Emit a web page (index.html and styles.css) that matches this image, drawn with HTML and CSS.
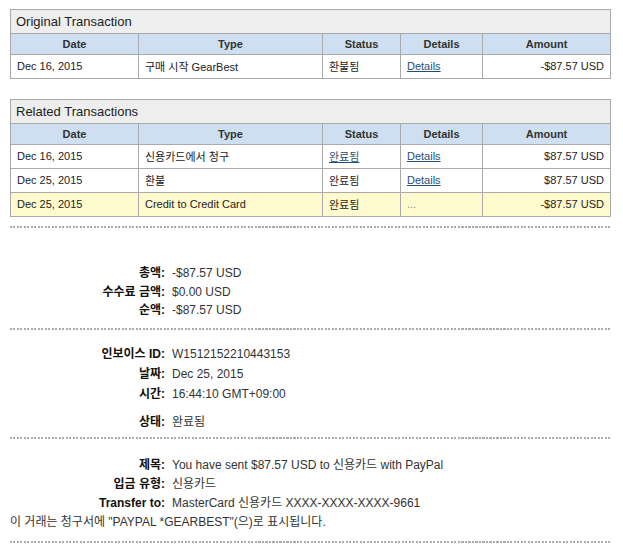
FILE: index.html
```html
<!DOCTYPE html>
<html>
<head>
<meta charset="utf-8">
<link rel="stylesheet" href="styles.css">
</head>
<body>
<div class="page">
  <table class="tx">
    <colgroup><col class="c-date"><col class="c-type"><col class="c-status"><col class="c-details"><col class="c-amount"></colgroup>
    <tr class="cap"><td colspan="5">Original Transaction</td></tr>
    <tr class="head"><th>Date</th><th>Type</th><th>Status</th><th>Details</th><th>Amount</th></tr>
    <tr class="row"><td>Dec 16, 2015</td><td>구매 시작 GearBest</td><td>환불됨</td><td><a href="#">Details</a></td><td class="amt">-$87.57 USD</td></tr>
  </table>

  <table class="tx second">
    <colgroup><col class="c-date"><col class="c-type"><col class="c-status"><col class="c-details"><col class="c-amount"></colgroup>
    <tr class="cap"><td colspan="5">Related Transactions</td></tr>
    <tr class="head"><th>Date</th><th>Type</th><th>Status</th><th>Details</th><th>Amount</th></tr>
    <tr class="row"><td>Dec 16, 2015</td><td>신용카드에서 청구</td><td><a href="#">완료됨</a></td><td><a href="#">Details</a></td><td class="amt">$87.57 USD</td></tr>
    <tr class="row"><td>Dec 25, 2015</td><td>환불</td><td>완료됨</td><td><a href="#">Details</a></td><td class="amt">$87.57 USD</td></tr>
    <tr class="row hl"><td>Dec 25, 2015</td><td>Credit to Credit Card</td><td>완료됨</td><td class="dim">...</td><td class="amt">-$87.57 USD</td></tr>
  </table>

  <div class="dots first"></div>

  <dl class="info sec1">
    <dt>총액:</dt><dd>-$87.57 USD</dd>
    <dt>수수료 금액:</dt><dd>$0.00 USD</dd>
    <dt>순액:</dt><dd>-$87.57 USD</dd>
  </dl>

  <div class="dots"></div>

  <dl class="info sec2">
    <dt>인보이스 ID:</dt><dd>W1512152210443153</dd>
    <dt>날짜:</dt><dd>Dec 25, 2015</dd>
    <dt>시간:</dt><dd>16:44:10 GMT+09:00</dd>
    <dt class="gap">상태:</dt><dd class="gap">완료됨</dd>
  </dl>

  <div class="dots"></div>

  <dl class="info sec3">
    <dt>제목:</dt><dd>You have sent $87.57 USD to 신용카드 with PayPal</dd>
    <dt>입금 유형:</dt><dd>신용카드</dd>
    <dt>Transfer to:</dt><dd>MasterCard 신용카드 XXXX-XXXX-XXXX-9661</dd>
  </dl>
  <p class="note">이 거래는 청구서에 "PAYPAL *GEARBEST"(으)로 표시됩니다.</p>

  <div class="dots"></div>
</div>
</body>
</html>
```

FILE: styles.css
```css
html, body {
  margin: 0;
  padding: 0;
  background: #fff;
}
body {
  font-family: "Liberation Sans", Arial, "Noto Sans CJK KR", sans-serif;
  color: #222;
}
.page {
  padding: 9px 0 0 10px;
  width: 600px;
}
.tx {
  border-collapse: collapse;
  width: 600px;
  table-layout: fixed;
  font-size: 11px;
}
.tx.second {
  margin-top: 20px;
}
.c-date { width: 128px; }
.c-type { width: 184px; }
.c-status { width: 78px; }
.c-details { width: 82px; }
.c-amount { width: 128px; }
.tx td, .tx th {
  border: 1px solid #a9a9a9;
  padding: 0 6px;
  text-align: left;
  vertical-align: middle;
}
.tx .cap td {
  background: #eeeeee;
  font-size: 13px;
  height: 23px;
  padding: 0 5px;
  color: #222;
}
.tx .head th {
  background: #cddff0;
  font-weight: bold;
  text-align: center;
  height: 20px;
  color: #333;
}
.tx .row td {
  height: 22px;
  background: #fff;
  padding-bottom: 1px;
}
.tx .row.hl td {
  background: #fffacd;
}
.tx td.amt {
  text-align: right;
}
.tx a {
  color: #1f4e79;
  text-decoration: underline;
}
.tx .dim {
  color: #888;
}
.dots {
  height: 2px;
  width: 600px;
  background: repeating-linear-gradient(to right, #ababab 0, #ababab 2px, transparent 2px, transparent 3.5px);
}
.dots.first {
  margin-top: 9px;
}
.info {
  display: grid;
  grid-template-columns: 155px 1fr;
  column-gap: 7px;
  margin: 0;
  font-size: 12px;
  line-height: 19px;
}
.info dt {
  font-weight: bold;
  text-align: right;
  color: #111;
}
.info dd {
  margin: 0;
  color: #333;
}
.info .gap {
  margin-top: 8px;
}
.sec1 { padding: 36px 0 8px; line-height: 18.5px; }
.sec2 { padding: 14px 0 5px; line-height: 20px; }
.sec3 { padding: 17px 0 0; }
.note {
  margin: 0;
  padding: 0 0 9px;
  font-size: 12px;
  line-height: 19px;
  color: #333;
}
```
